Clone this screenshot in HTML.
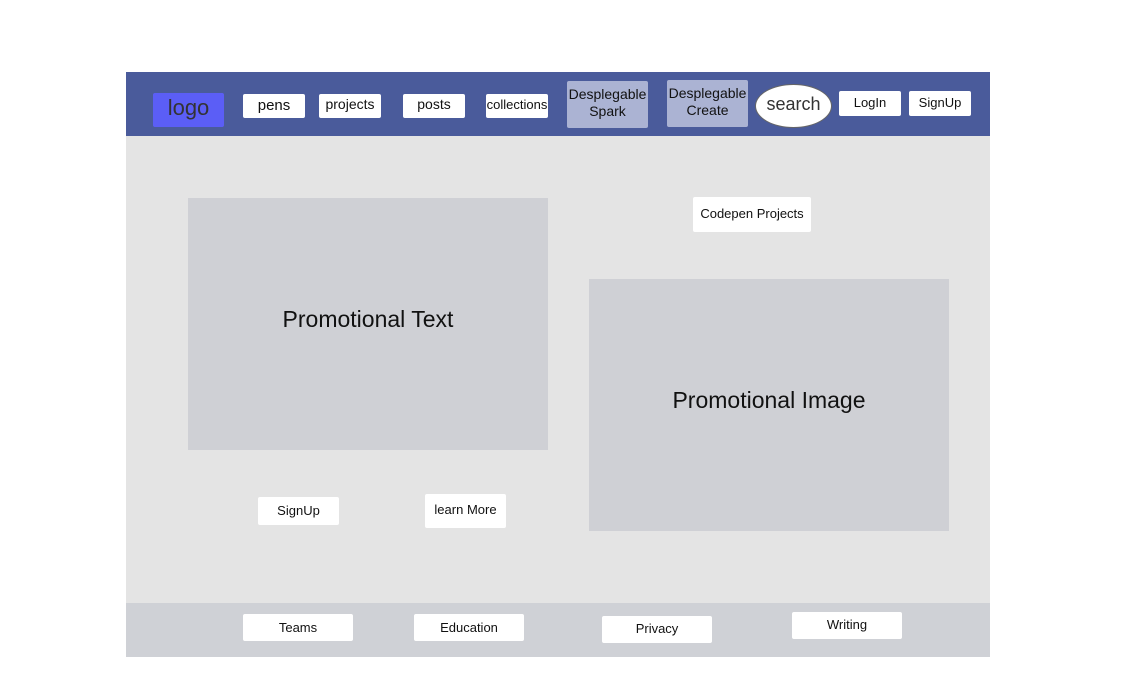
<!DOCTYPE html>
<html><head><style>
body{margin:0;width:1125px;height:675px;background:#fff;position:relative;font-family:"Liberation Sans",sans-serif;overflow:hidden}
div{position:absolute;box-sizing:border-box}
.b{background:#fff;display:flex;align-items:center;justify-content:center;color:#111;text-align:center;border-radius:2px}
</style></head><body>
<div style="left:126px;top:72px;width:864px;height:64px;background:#4a5b9b"></div>
<div style="left:126px;top:136px;width:864px;height:467px;background:#e4e4e4"></div>
<div style="left:126px;top:603px;width:864px;height:54px;background:#cfd1d6"></div>

<div class="b" style="left:153px;top:93px;width:71px;height:34px;background:#5b5ef6;color:#333;font-size:22px;padding-bottom:4px">logo</div>
<div class="b" style="left:243px;top:94px;width:62px;height:24px;font-size:15px;padding-bottom:2px">pens</div>
<div class="b" style="left:319px;top:94px;width:62px;height:24px;font-size:14px;padding-bottom:4px">projects</div>
<div class="b" style="left:403px;top:94px;width:62px;height:24px;font-size:14px;padding-bottom:4px">posts</div>
<div class="b" style="left:486px;top:94px;width:62px;height:24px;font-size:13px;padding-bottom:3px">collections</div>
<div class="b" style="left:567px;top:81px;width:81px;height:47px;background:#abb3d3;font-size:14px;line-height:17px;padding-bottom:4px">Desplegable<br>Spark</div>
<div class="b" style="left:667px;top:80px;width:81px;height:47px;background:#abb3d3;font-size:14px;line-height:17px;padding-bottom:4px">Desplegable<br>Create</div>
<div class="b" style="left:755px;top:84px;width:77px;height:44px;border-radius:50%;border:1px solid #666;font-size:18px;color:#333;padding-bottom:4px">search</div>
<div class="b" style="left:839px;top:91px;width:62px;height:25px;font-size:13px;padding-bottom:3px">LogIn</div>
<div class="b" style="left:909px;top:91px;width:62px;height:25px;font-size:13px;padding-bottom:3px">SignUp</div>

<div class="b" style="left:188px;top:198px;width:360px;height:252px;background:#cfd0d5;font-size:23px;border-radius:0;padding-bottom:10px">Promotional Text</div>
<div class="b" style="left:693px;top:197px;width:118px;height:35px;font-size:13px;padding-bottom:2px">Codepen Projects</div>
<div class="b" style="left:589px;top:279px;width:360px;height:252px;background:#cfd0d5;font-size:23px;border-radius:0;padding-bottom:10px">Promotional Image</div>
<div class="b" style="left:258px;top:497px;width:81px;height:28px;font-size:13px;padding-bottom:1px">SignUp</div>
<div class="b" style="left:425px;top:494px;width:81px;height:34px;font-size:13px;padding-bottom:3px">learn More</div>

<div class="b" style="left:243px;top:614px;width:110px;height:27px;font-size:13px;padding-bottom:0">Teams</div>
<div class="b" style="left:414px;top:614px;width:110px;height:27px;font-size:13px;padding-bottom:0">Education</div>
<div class="b" style="left:602px;top:616px;width:110px;height:27px;font-size:13px;padding-bottom:2px">Privacy</div>
<div class="b" style="left:792px;top:612px;width:110px;height:27px;font-size:13px;padding-bottom:2px">Writing</div>
</body></html>
